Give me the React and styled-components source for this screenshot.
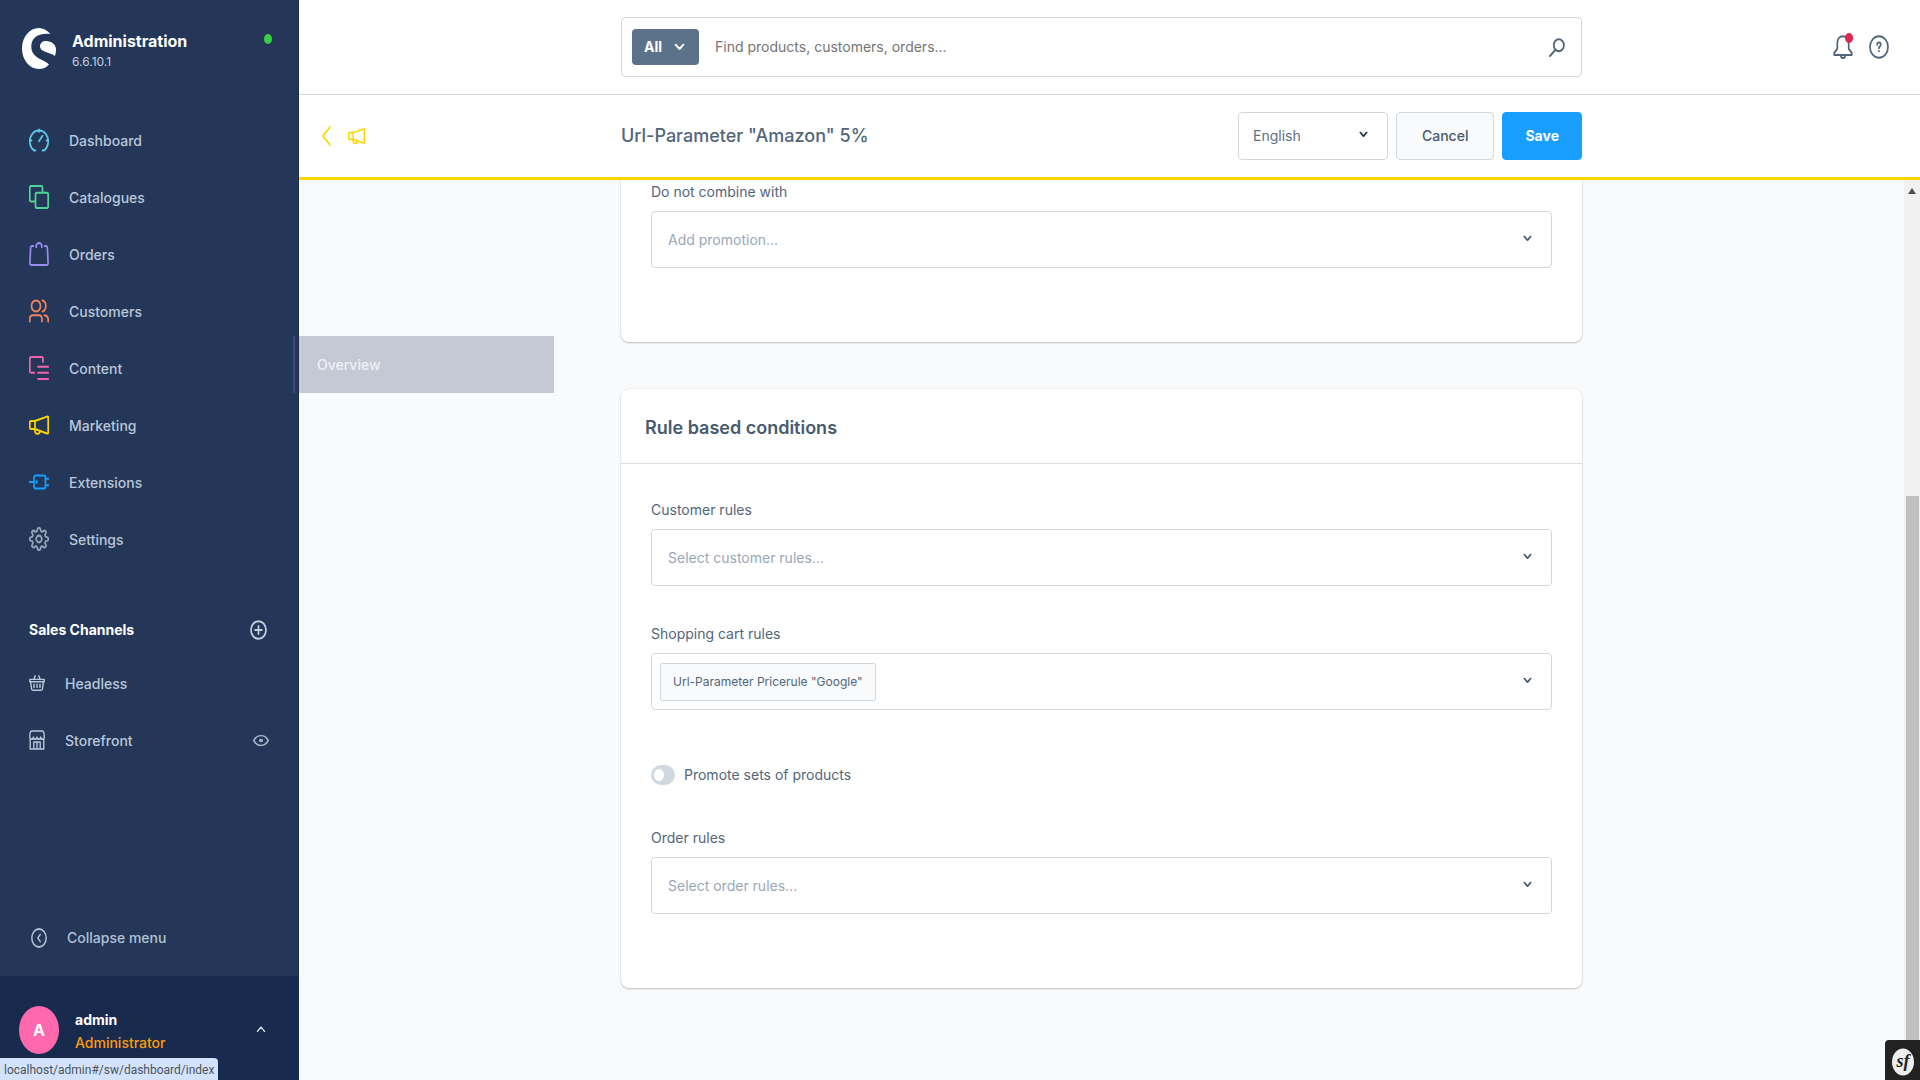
import styled, { createGlobalStyle } from "styled-components";

const GlobalStyle = createGlobalStyle`
  * {
    box-sizing: border-box;
  }

  body {
    margin: 0;
    font-family: "Inter", "Liberation Sans", sans-serif;
    font-size: 14px;
    line-height: 20px;
    color: #52667a;
    background: #f9fafc;
  }

  button,
  input,
  select {
    font: inherit;
    color: inherit;
  }
`;

const Layout = styled.div`
  display: flex;
  height: 100vh;
  overflow: hidden;
`;

const Sidebar = styled.aside`
  position: relative;
  flex: 0 0 299px;
  display: flex;
  flex-direction: column;
  background: #243758;
  border-right: 1px solid #1c2e4e;
`;

const Brand = styled.header`
  display: flex;
  align-items: flex-start;
  gap: 16px;
  padding: 28px 26px 0 22px;
`;

const BrandText = styled.div`
  flex: 1;
  padding-top: 2px;
`;

const BrandName = styled.div`
  font-size: 16px;
  font-weight: 700;
  line-height: 22px;
  color: #fff;
`;

const BrandVersion = styled.div`
  font-size: 12px;
  line-height: 20px;
  color: #c3cfdf;
`;

const StatusDot = styled.span`
  width: 8px;
  height: 10px;
  margin-top: 6px;
  border-radius: 50%;
  background: #37d046;
`;

const Nav = styled.nav`
  padding-top: 40px;
`;

const NavLink = styled.a`
  display: flex;
  align-items: center;
  gap: 20px;
  height: 57px;
  padding-left: 29px;
  color: #b9c7da;
  text-decoration: none;
  font-weight: 500;
  font-size: 14px;

  svg {
    margin-bottom: 2px;
    color: ${(props) => props.$color};
  }
`;

const ChannelHead = styled.div`
  display: flex;
  align-items: center;
  justify-content: space-between;
  height: 40px;
  margin-top: 42px;
  margin-bottom: 5px;
  padding: 0 31px 0 29px;
`;

const ChannelTitle = styled.h2`
  margin: 0;
  font-size: 14px;
  font-weight: 700;
  color: #fff;
`;

const IconButton = styled.button`
  display: flex;
  padding: 0;
  border: none;
  background: none;
  color: ${(props) => props.$color || "#52667a"};
  cursor: pointer;
`;

const ChannelRow = styled.div`
  display: flex;
  align-items: center;
  justify-content: space-between;
  height: 57px;
  padding: 0 29px;
`;

const ChannelLink = styled.a`
  display: flex;
  align-items: center;
  gap: 20px;
  color: #b9c7da;
  text-decoration: none;
  font-weight: 500;

  svg {
    margin-bottom: 2px;
  }
`;

const Collapse = styled.button`
  display: flex;
  align-items: center;
  gap: 20px;
  height: 57px;
  margin-top: auto;
  margin-bottom: 10px;
  padding: 0 31px;
  border: none;
  background: none;
  color: #b3c1d4;
  font-weight: 500;
  cursor: pointer;
`;

const User = styled.button`
  display: flex;
  align-items: flex-start;
  gap: 16px;
  height: 104px;
  padding: 30px 32px 0 19px;
  border: none;
  background: #182a4d;
  text-align: left;
  cursor: pointer;
`;

const Avatar = styled.span`
  display: flex;
  align-items: center;
  justify-content: center;
  width: 40px;
  height: 48px;
  border-radius: 50%;
  background: #ff68ac;
  color: #fff;
  font-size: 16px;
  font-weight: 700;
`;

const UserText = styled.span`
  flex: 1;
  display: flex;
  flex-direction: column;
  padding-top: 2px;
  line-height: 23px;
  font-weight: 500;
  color: #ff9a0c;
`;

const UserName = styled.strong`
  font-weight: 700;
  color: #fff;
`;

const UserArrow = styled.span`
  display: flex;
  padding-top: 19px;
  color: #d5deea;
`;

const FlyoutMark = styled.span`
  position: absolute;
  top: 336px;
  right: 3px;
  width: 2px;
  height: 57px;
  background: #434678;
`;

const Flyout = styled.a`
  position: absolute;
  top: 336px;
  left: 299px;
  z-index: 2;
  width: 255px;
  padding: 0 18px;
  line-height: 57px;
  background: #c4c9d4;
  color: #eef1f5;
  font-weight: 500;
  text-decoration: none;
`;

const BrowserStatus = styled.div`
  position: fixed;
  left: 0;
  bottom: 0;
  z-index: 3;
  padding: 2px 4px 0;
  border-top-right-radius: 4px;
  background: #d3e3fd;
  color: #4c535c;
  font-family: "Roboto", sans-serif;
  font-size: 12px;
  line-height: 20px;
`;

const Main = styled.main`
  flex: 1;
  min-width: 0;
  display: flex;
  flex-direction: column;
`;

const bar = `
  display: grid;
  grid-template-columns: 1fr minmax(0, 961px) 1fr;
  align-items: center;
  padding-right: 16px;
  background: #fff;
`;

const TopBar = styled.header`
  ${bar}
  height: 95px;
  border-bottom: 1px solid #d1d9e0;
`;

const SmartBar = styled.div`
  ${bar}
  height: 85px;
  border-bottom: 3px solid #ffd500;
`;

const Search = styled.form`
  grid-column: 2;
  display: flex;
  align-items: center;
  gap: 16px;
  height: 60px;
  padding: 0 16px 0 10px;
  border: 1px solid #d1d9e0;
  border-radius: 4px;
`;

const SearchType = styled.button`
  display: flex;
  align-items: center;
  gap: 12px;
  height: 36px;
  padding: 0 14px 0 12px;
  border: none;
  border-radius: 4px;
  background: #5c728a;
  color: #fff;
  font-weight: 700;
`;

const SearchInput = styled.input`
  flex: 1;
  min-width: 0;
  padding: 0;
  border: none;
  outline: none;

  &::placeholder {
    color: #757575;
    opacity: 1;
  }
`;

const TopActions = styled.div`
  display: flex;
  justify-content: flex-end;
  gap: 16px;
  padding-right: 15px;
`;

const Badge = styled.span`
  position: absolute;
  top: -2px;
  right: 0;
  width: 8px;
  height: 10px;
  border-radius: 50%;
  background: #e0244a;
`;

const Notifications = styled(IconButton)`
  position: relative;
`;

const BackLinks = styled.div`
  display: flex;
  align-items: center;
  gap: 17px;
  padding-left: 23px;
  color: #ffd500;
`;

const BackLink = styled.a`
  display: flex;
  color: inherit;
`;

const SmartContent = styled.div`
  display: flex;
  align-items: center;
  gap: 8px;
`;

const PageTitle = styled.h1`
  flex: 1;
  margin: 0;
  font-size: 18px;
  line-height: 24px;
  font-weight: 500;
`;

const Button = styled.button`
  height: 48px;
  padding: 0 ${(props) => (props.$primary ? "22px" : "25px")};
  border: 1px solid ${(props) => (props.$primary ? "#189eff" : "#d1d9e0")};
  border-radius: 4px;
  background: ${(props) => (props.$primary ? "#189eff" : "#f9fafc")};
  color: ${(props) => (props.$primary ? "#fff" : "#485a70")};
  font-weight: ${(props) => (props.$primary ? 700 : 500)};
  cursor: pointer;
`;

const SelectWrap = styled.div`
  display: grid;
  align-items: center;
  width: ${(props) => props.$width || "100%"};

  > * {
    grid-area: 1 / 1;
  }

  > svg {
    justify-self: end;
    margin-right: 20px;
    margin-bottom: 3px;
    color: ${(props) => (props.$width ? "#22344c" : "#485a70")};
    pointer-events: none;
  }
`;

const Select = styled.select`
  appearance: none;
  width: 100%;
  height: ${(props) => props.$height || "57px"};
  padding: 0 ${(props) => (props.$height ? "14px" : "16px")};
  border: 1px solid #d1d9e0;
  border-radius: 4px;
  background: #fff;
  color: ${(props) => props.$color || "#98a7ba"};
`;

const MultiBox = styled.div`
  display: flex;
  align-items: center;
  width: 100%;
  height: 57px;
  padding: 0 48px 0 8px;
  border: 1px solid #d1d9e0;
  border-radius: 4px;
`;

const Chip = styled.span`
  padding: 0 12px;
  border: 1px solid #d1d9e0;
  border-radius: 2px;
  background: #f9fafc;
  font-size: 12px;
  line-height: 36px;
  white-space: nowrap;
`;

const MultiInput = styled.input`
  flex: 1;
  min-width: 0;
  border: none;
  outline: none;
`;

const ScrollArea = styled.div`
  flex: 1;
  min-height: 0;
  display: flex;
`;

const Cards = styled.div`
  flex: 1;
  min-width: 0;
  display: flex;
  flex-direction: column;
  align-items: center;
  gap: 47px;
  overflow: hidden;
`;

const Card = styled.section`
  width: 100%;
  max-width: 961px;
  border-radius: ${(props) => (props.$cut ? "0 0 8px 8px" : "8px")};
  background: #fff;
  box-shadow: 0 1px 2px rgba(0, 0, 0, 0.22), 0 0 2px rgba(0, 0, 0, 0.08);
`;

const CardHead = styled.h2`
  margin: 0;
  padding: 27px 24px 23px;
  border-bottom: 1px solid #d9dee4;
  color: #485a70;
  font-size: 18px;
  line-height: 24px;
  font-weight: 600;
`;

const CardBody = styled.div`
  padding: ${(props) => (props.$cut ? "2px" : "36px")} 30px 74px;
`;

const Field = styled.div`
  margin-bottom: ${(props) => (props.$last ? "0" : "38px")};
`;

const FieldLabel = styled.label`
  display: block;
  margin-bottom: 9px;
`;

const SwitchRow = styled.div`
  display: flex;
  align-items: center;
  gap: 9px;
  padding: 17px 0 43px;
`;

const Switch = styled.input`
  appearance: none;
  display: flex;
  align-items: center;
  width: 24px;
  height: 20px;
  margin: 0;
  padding: 0 3px;
  border-radius: 10px;
  background: #d1d9e0;

  &::before {
    content: "";
    width: 10px;
    height: 12px;
    border-radius: 50%;
    background: #fff;
  }
`;

const Scrollbar = styled.div`
  flex: 0 0 16px;
  display: flex;
  flex-direction: column;
  align-items: center;
  padding-top: 8px;
  background: #f1f1f1;
  color: #505050;
`;

const ScrollThumb = styled.div`
  flex: 1;
  width: 13px;
  margin-top: 302px;
  background: #c1c1c1;
`;

const DebugBadge = styled.button`
  position: fixed;
  right: 0;
  bottom: 0;
  display: flex;
  padding: 8px 6px 4px 7px;
  border: none;
  border-top-left-radius: 4px;
  background: #222;
`;

// Line icons share a 20x20 grid and fill whatever width/height they get
const Icon = ({ w = 20, h = 24, sw = 1.7, children }) => (
  <svg
    width={w}
    height={h}
    viewBox="0 0 20 20"
    preserveAspectRatio="none"
    fill="none"
    stroke="currentColor"
    strokeWidth={sw}
    strokeLinecap="round"
    strokeLinejoin="round"
    aria-hidden="true"
  >
    {children}
  </svg>
);

const Chevron = ({ w = 9, h = 7, sw = 4, up }) => (
  <Icon w={w} h={h} sw={sw}>
    <path d={up ? "M3 16 10 5l7 11" : "M3 4l7 11 7-11"} />
  </Icon>
);

const gearPath = () => {
  const points = [];
  for (let i = 0; i < 96; i++) {
    const a = (i / 96) * Math.PI * 2;
    const r = 8 + 1.3 * Math.tanh(2 * Math.cos(8 * a));
    points.push(
      `${(10 + r * Math.sin(a)).toFixed(2)} ${(10 - r * Math.cos(a)).toFixed(2)}`
    );
  }
  return `M${points.join("L")}Z`;
};

const Megaphone = () => (
  <>
    <path d="M6 6.700 18 3q1.200-.3 1.200.8v12.400q0 1.100-1.200.8L6 13.400z" />
    <path d="M6 6.700H2q-1.200 0-1.200 1.200v4.300q0 1.200 1.200 1.200h4" />
    <path d="M6 13.600v1.400a2.500 2.200 0 0 0 5 .2" />
  </>
);

const Logo = () => (
  <svg width="34" height="41" viewBox="0 0 34 41" fill="#fff" aria-hidden="true">
    <path d="M28.500 6C25 2 21 0 17 0 7.500 0 0 9 0 20.500S7.500 41 17 41c4 0 7.500-1.500 10-4.500C24 32 9.300 31 9.300 18.500 9.300 10 16 4.500 28.500 6Z" />
    <path d="M18 18.500c0-3.500 2.500-5.500 6-5.500 5.500 0 10 3.500 10 8.500 0 2.500-.4 4.500-1 6.500-3-2.200-7-3-10.500-4.500-2.700-1.200-4.500-2.700-4.500-5Z" />
  </svg>
);

const navItems = [
  {
    label: "Dashboard",
    color: "#5cc8e6",
    icon: (
      <>
        <path d="M6.500 18.800H5.200A9.200 9 0 1 1 14.800 18.800h-1.300" />
        <path d="M10 11l3.500-4.500M10 1.200v2M1 10.500h1.500M17.500 10.500H19" />
      </>
    ),
  },
  {
    label: "Catalogues",
    color: "#4ed699",
    icon: (
      <>
        <path d="M5.500 13.800H2.300Q.8 13.800.8 12.300V2.300Q.8.800 2.300.800h9.700q1.500 0 1.500 1.500V6" />
        <rect x="6.500" y="6.500" width="12.700" height="12.700" rx="1.500" />
      </>
    ),
  },
  {
    label: "Orders",
    color: "#9c8bee",
    icon: (
      <>
        <path d="M4.300 3.300H3q-1.300 0-1.400 1.300L.9 17.500q0 1.700 1.600 1.700h15q1.600 0 1.600-1.700l-.7-12.900q-.1-1.300-1.400-1.300h-1.300" />
        <path d="M7.200 4.300V3.400a2.800 2.600 0 0 1 5.600 0v.9" />
      </>
    ),
  },
  {
    label: "Customers",
    color: "#f5845c",
    icon: (
      <>
        <ellipse cx="7" cy="5.800" rx="4.500" ry="4.600" />
        <path d="M13.500 1.200c2 .5 3.300 2.400 3.300 4.600s-1.300 4.100-3.300 4.600" />
        <path d="M.8 18.800V17c0-2 1.200-3.500 3-3.500h6.200c1.800 0 3 1.500 3 3.500v1.800M15.500 13.500c2.200.3 3.700 2 3.700 4v1.300" />
      </>
    ),
  },
  {
    label: "Content",
    color: "#f760ac",
    icon: (
      <path d="M5.300 14H2.300Q.8 14 .8 12.500V2.300Q.8.800 2.300.800h10.200q1.500 0 1.500 1.500v2.600M9 9h10.200M9 14h10.200M9 19.100h10.200" />
    ),
  },
  { label: "Marketing", color: "#ffd500", icon: <Megaphone /> },
  {
    label: "Extensions",
    color: "#189eff",
    icon: (
      <>
        <rect x="5" y="4.500" width="11.500" height="11" rx="2" />
        <path d="M.8 10H5M7.800 9.200v1.600M16.500 7.300h2.700M16.500 12.700h2.700" />
      </>
    ),
  },
  {
    label: "Settings",
    color: "#93a5b8",
    icon: (
      <>
        <path d={gearPath()} />
        <circle cx="10" cy="10" r="2.800" />
      </>
    ),
  },
];

const SelectField = ({ id, label, placeholder, last }) => (
  <Field $last={last}>
    <FieldLabel htmlFor={id}>{label}</FieldLabel>
    <SelectWrap>
      <Select id={id} defaultValue="">
        <option value="">{placeholder}</option>
      </Select>
      <Chevron />
    </SelectWrap>
  </Field>
);

const AdminMenu = () => (
  <Sidebar>
    <Brand>
      <Logo />
      <BrandText>
        <BrandName>Administration</BrandName>
        <BrandVersion>6.6.10.1</BrandVersion>
      </BrandText>
      <StatusDot />
    </Brand>
    <Nav>
      {navItems.map((item) => (
        <NavLink key={item.label} href="#" $color={item.color}>
          <Icon>{item.icon}</Icon>
          {item.label}
        </NavLink>
      ))}
    </Nav>
    <ChannelHead>
      <ChannelTitle>Sales Channels</ChannelTitle>
      <IconButton $color="#c3cfdf" aria-label="Add sales channel">
        <Icon w={17} h={20} sw={2}>
          <circle cx="10" cy="10" r="8.800" />
          <path d="M10 6v8M6 10h8" />
        </Icon>
      </IconButton>
    </ChannelHead>
    <ChannelRow>
      <ChannelLink href="#">
        <Icon w={16} h={16} sw={1.8}>
          <path d="M1 5.500h18v3H1zM2 8.500l1.200 9q.2 1.500 1.700 1.500h10.200q1.500 0 1.700-1.500l1.200-9M6.300 11.500v4M10 11.500v4M13.700 11.500v4M6 5.500l1.800-4.500M14 5.500l-1.800-4.500" />
        </Icon>
        Headless
      </ChannelLink>
    </ChannelRow>
    <ChannelRow>
      <ChannelLink href="#">
        <Icon w={16} h={20}>
          <path d="M3 1h14q2 1 2 4v2a2.200 2.200 0 0 1-4.500 0 2.250 2.200 0 0 1-4.500 0 2.250 2.200 0 0 1-4.500 0A2.200 2.200 0 0 1 1 7V5q0-3 2-4Z" />
          <path d="M1.500 9v10h17V9M6 19v-7h8v7M10 12v7" />
        </Icon>
        Storefront
      </ChannelLink>
      <IconButton $color="#a9b9cd" aria-label="Open storefront">
        <Icon w={16} h={13} sw={2.2}>
          <path d="M1 10c2-5 5.500-7.500 9-7.500s7 2.500 9 7.500c-2 5-5.500 7.500-9 7.500S3 15 1 10Z" />
          <circle cx="10" cy="10" r="1.500" />
        </Icon>
      </IconButton>
    </ChannelRow>
    <Collapse>
      <Icon w={16} h={20} sw={1.8}>
        <circle cx="10" cy="10" r="9" />
        <path d="M11.500 6.500 8.500 10l3 3.500" />
      </Icon>
      Collapse menu
    </Collapse>
    <User>
      <Avatar>A</Avatar>
      <UserText>
        <UserName>admin</UserName>
        Administrator
      </UserText>
      <UserArrow>
        <Chevron w={10} h={8} up sw={3} />
      </UserArrow>
    </User>
    <FlyoutMark />
    <Flyout href="#">Overview</Flyout>
  </Sidebar>
);

const App = () => {
  return (
    <Layout>
      <GlobalStyle />
      <AdminMenu />
      <Main>
        <TopBar>
          <Search>
            <SearchType type="button">
              All
              <Chevron w={11} h={8} />
            </SearchType>
            <SearchInput
              aria-label="Search"
              placeholder="Find products, customers, orders..."
            />
            <IconButton type="button" aria-label="Start search">
              <Icon w={16} h={19} sw={2.2}>
                <circle cx="12.300" cy="7.600" r="6.300" />
                <path d="M8 12.500 1.200 19" />
              </Icon>
            </IconButton>
          </Search>
          <TopActions>
            <Notifications aria-label="Notifications">
              <Icon>
                <path d="M10 1C6.500 1 4.300 3.500 4.300 7v4.500L1.200 15v1.700h17.600V15l-3.100-3.500V7c0-3.500-2.200-6-5.700-6ZM8 17q0 2.200 2 2.200t2-2.200" />
              </Icon>
              <Badge />
            </Notifications>
            <IconButton aria-label="Help">
              <Icon>
                <circle cx="10" cy="10" r="9" />
                <path d="M8.200 8.200q0-1.900 1.800-1.900t1.800 1.700q0 1-.9 1.500t-.9 1.500M10 13.400v.2" />
              </Icon>
            </IconButton>
          </TopActions>
        </TopBar>
        <SmartBar>
          <BackLinks>
            <BackLink href="#" aria-label="Back">
              <Icon w={9} h={20} sw={2.4}>
                <path d="M18 1 2 10l16 9" />
              </Icon>
            </BackLink>
            <Icon w={17} h={20}>
              <Megaphone />
            </Icon>
          </BackLinks>
          <SmartContent>
            <PageTitle>Url-Parameter "Amazon" 5%</PageTitle>
            <SelectWrap $width="150px">
              <Select
                aria-label="Language"
                $height="48px"
                $color="#5c6f84"
                defaultValue="en"
              >
                <option value="en">English</option>
              </Select>
              <Chevron />
            </SelectWrap>
            <Button>Cancel</Button>
            <Button $primary>Save</Button>
          </SmartContent>
        </SmartBar>
        <ScrollArea>
          <Cards>
            <Card $cut>
              <CardBody $cut>
                <SelectField
                  id="exclusions"
                  label="Do not combine with"
                  placeholder="Add promotion..."
                  last
                />
              </CardBody>
            </Card>
            <Card>
              <CardHead>Rule based conditions</CardHead>
              <CardBody>
                <SelectField
                  id="customer-rules"
                  label="Customer rules"
                  placeholder="Select customer rules..."
                />
                <Field>
                  <FieldLabel htmlFor="cart-rules">
                    Shopping cart rules
                  </FieldLabel>
                  <SelectWrap>
                    <MultiBox>
                      <Chip>Url-Parameter Pricerule "Google"</Chip>
                      <MultiInput id="cart-rules" />
                    </MultiBox>
                    <Chevron />
                  </SelectWrap>
                </Field>
                <SwitchRow>
                  <Switch type="checkbox" id="set-group" />
                  <label htmlFor="set-group">Promote sets of products</label>
                </SwitchRow>
                <SelectField
                  id="order-rules"
                  label="Order rules"
                  placeholder="Select order rules..."
                  last
                />
              </CardBody>
            </Card>
          </Cards>
          <Scrollbar>
            <svg width="8" height="6" viewBox="0 0 8 6" aria-hidden="true">
              <path d="M4 0l4 6H0z" fill="currentColor" />
            </svg>
            <ScrollThumb />
          </Scrollbar>
        </ScrollArea>
      </Main>
      <BrowserStatus>localhost/admin#/sw/dashboard/index</BrowserStatus>
      <DebugBadge aria-label="Symfony profiler">
        <svg width="22" height="28" viewBox="0 0 22 28">
          <ellipse cx="11" cy="14" rx="11" ry="13.500" fill="#eee" />
          <text
            x="11"
            y="19"
            textAnchor="middle"
            fontFamily="Liberation Serif, serif"
            fontStyle="italic"
            fontWeight="700"
            fontSize="18"
            fill="#222"
          >
            sf
          </text>
        </svg>
      </DebugBadge>
    </Layout>
  );
};

export default App;
